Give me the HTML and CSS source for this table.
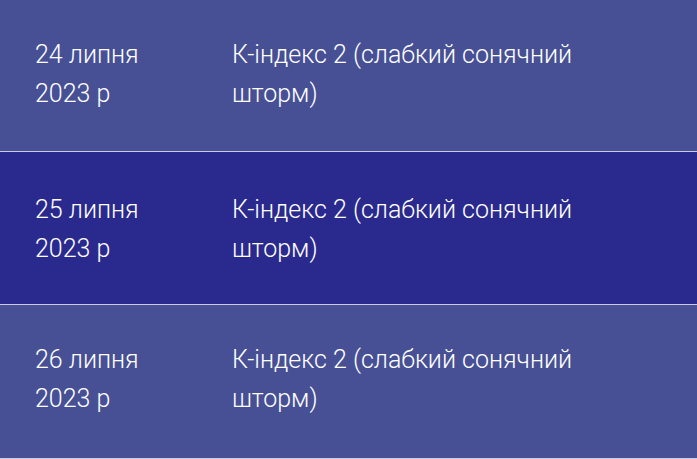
FILE: index.html
```html
<!DOCTYPE html>
<html lang="uk">
<head>
<meta charset="utf-8">
<link rel="stylesheet" href="styles.css">
</head>
<body>
<div class="table">
  <div class="row light first">
    <div class="date">24 липня 2023 р</div>
    <div class="desc">К-індекс 2 (слабкий сонячний шторм)</div>
  </div>
  <div class="row dark second">
    <div class="date">25 липня 2023 р</div>
    <div class="desc">К-індекс 2 (слабкий сонячний шторм)</div>
  </div>
  <div class="row light third">
    <div class="date">26 липня 2023 р</div>
    <div class="desc">К-індекс 2 (слабкий сонячний шторм)</div>
  </div>
</div>
</body>
</html>
```

FILE: styles.css
```css
html, body {
  margin: 0;
  padding: 0;
  background: #ffffff;
}
.table {
  width: 697px;
  font-family: Roboto, "Noto Sans", sans-serif;
  font-weight: 300;
  font-size: 25px;
  line-height: 39px;
  color: #ffffff;
}
.row {
  box-sizing: border-box;
  display: grid;
  grid-template-columns: 197px 380px;
  align-content: start;
  padding: 35px 0 0 35px;
  border-bottom: 1px solid #c9c9e8;
}
.row.light {
  background: #475095;
}
.row.dark {
  background: #2a2a8e;
}
.row.first {
  height: 152px;
}
.row.second {
  height: 153px;
  padding-top: 38px;
}
.row.third {
  height: 154px;
}
.date {
  width: 130px;
}
```
